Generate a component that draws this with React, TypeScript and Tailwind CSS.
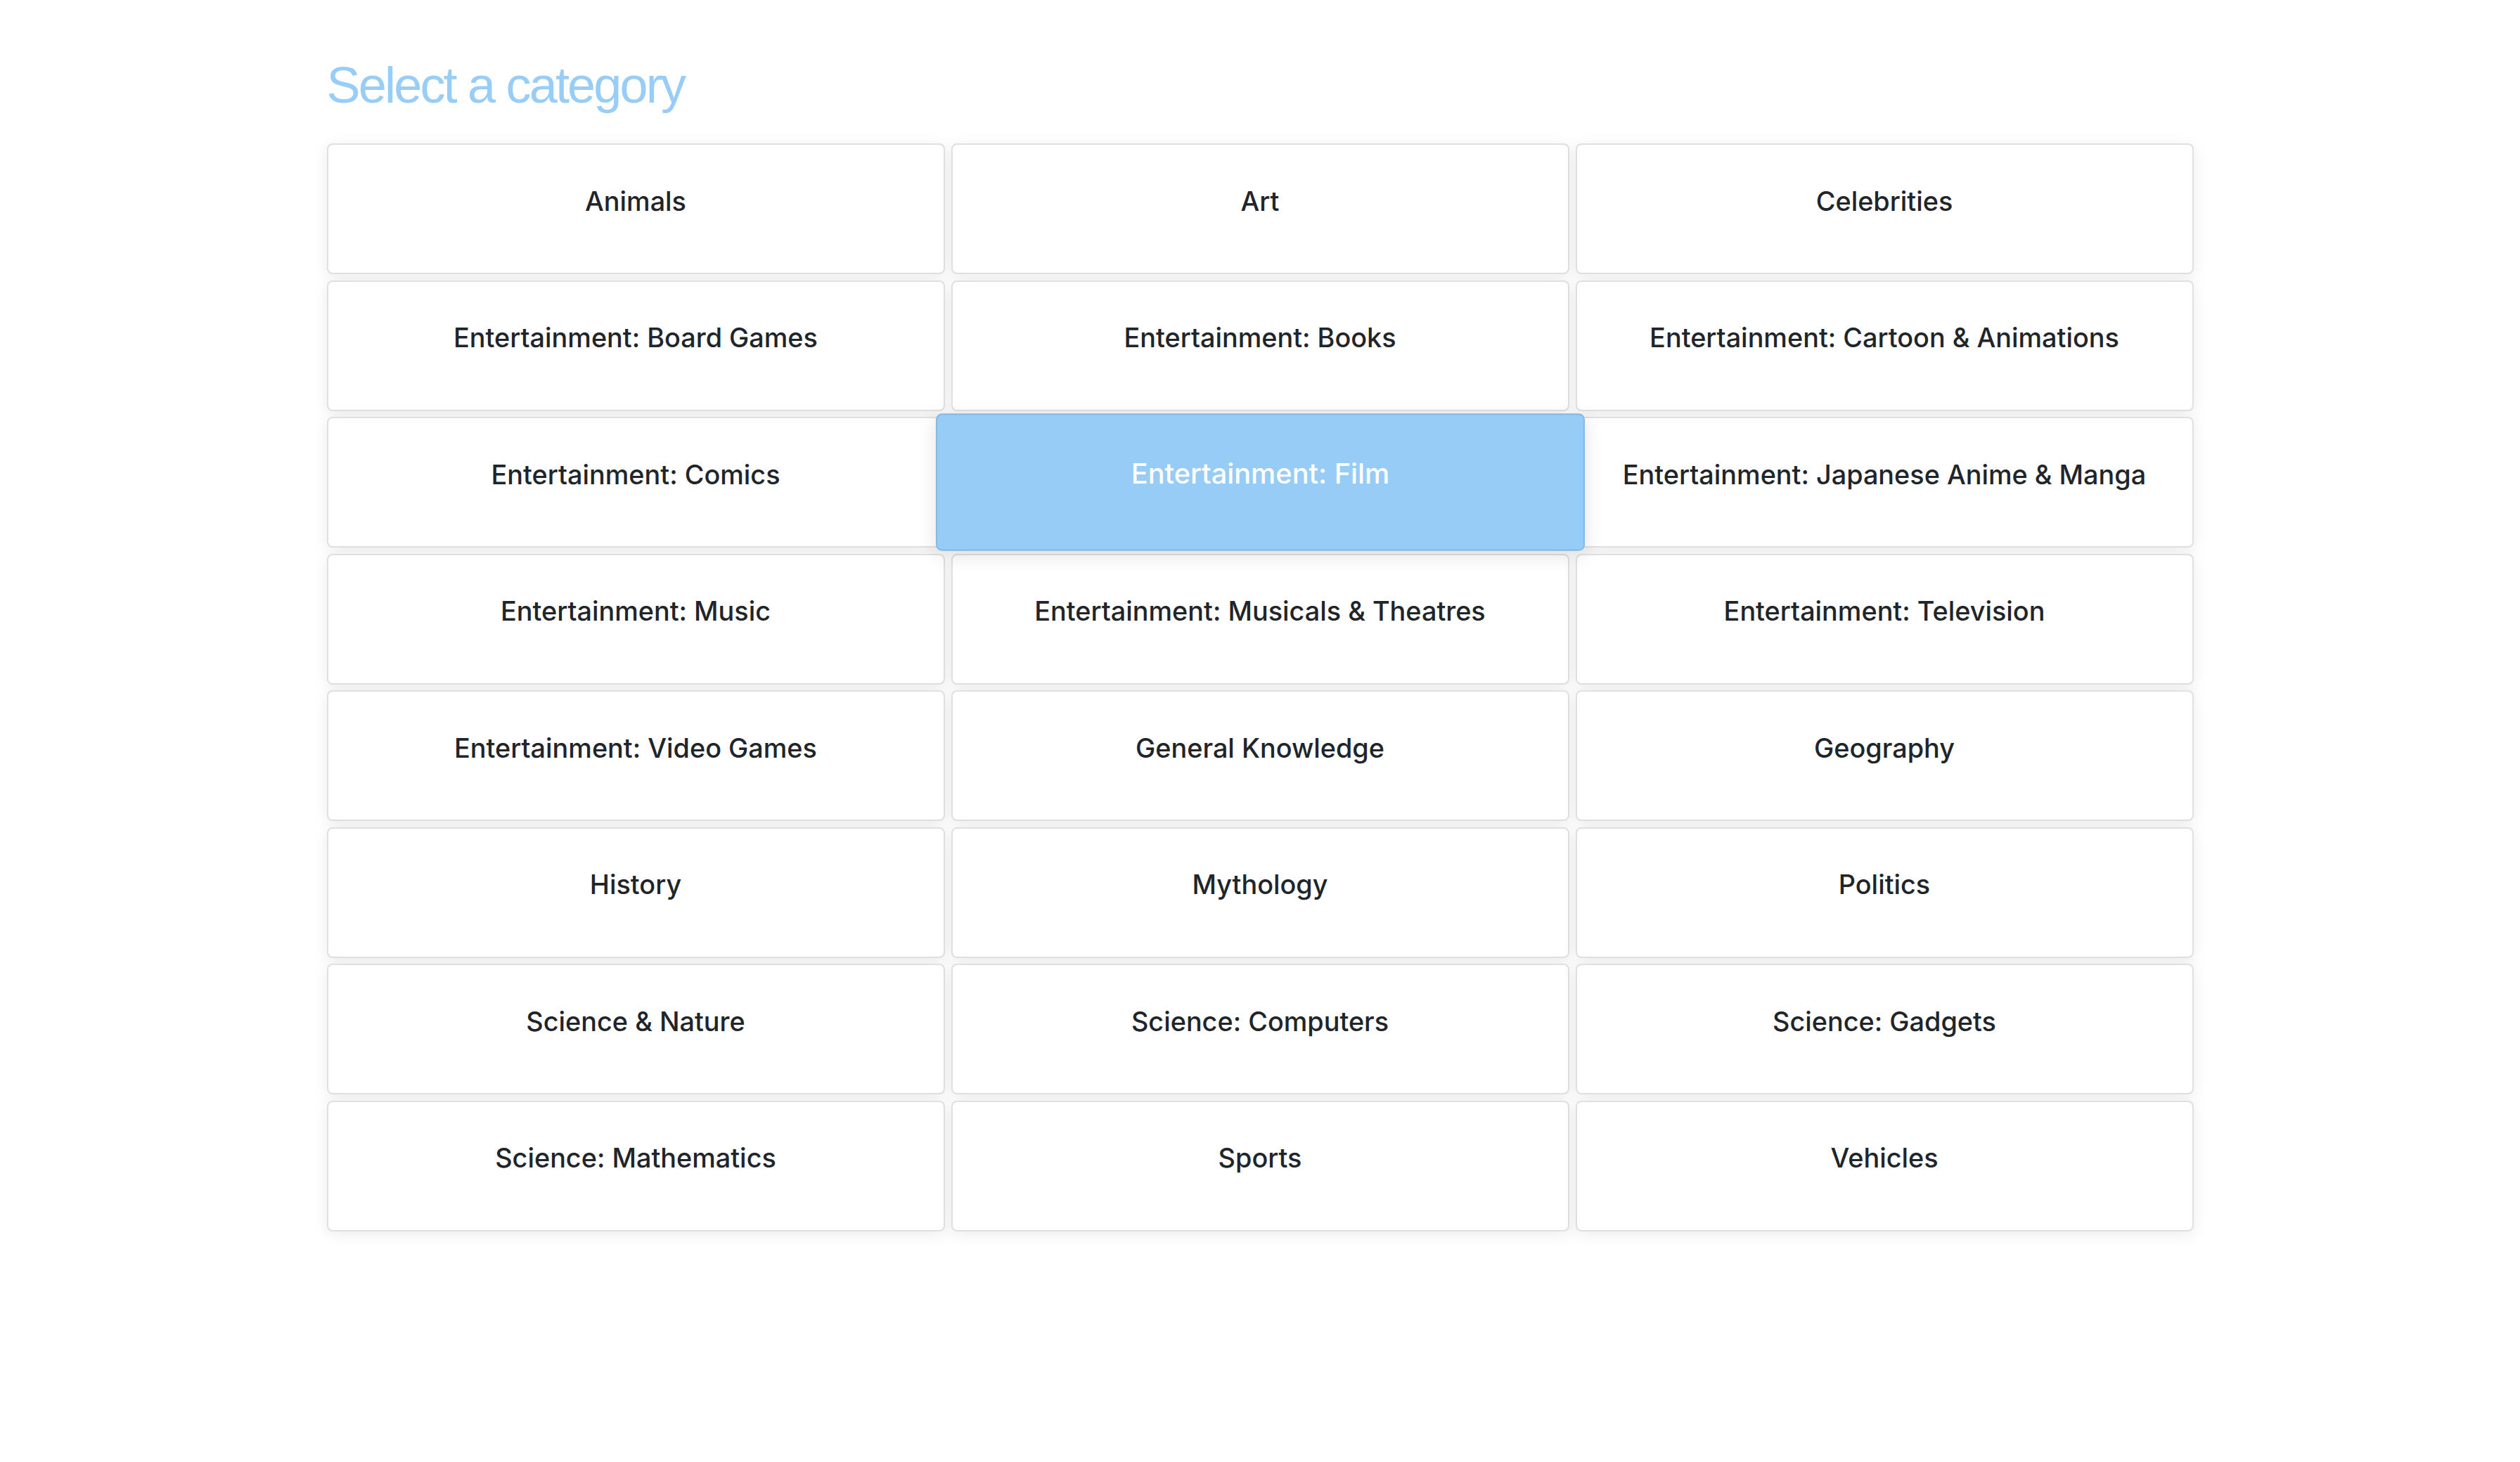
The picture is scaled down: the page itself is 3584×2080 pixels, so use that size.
import React from "react";

const categories = [
  "Animals",
  "Art",
  "Celebrities",
  "Entertainment: Board Games",
  "Entertainment: Books",
  "Entertainment: Cartoon & Animations",
  "Entertainment: Comics",
  "Entertainment: Film",
  "Entertainment: Japanese Anime & Manga",
  "Entertainment: Music",
  "Entertainment: Musicals & Theatres",
  "Entertainment: Television",
  "Entertainment: Video Games",
  "General Knowledge",
  "Geography",
  "History",
  "Mythology",
  "Politics",
  "Science & Nature",
  "Science: Computers",
  "Science: Gadgets",
  "Science: Mathematics",
  "Sports",
  "Vehicles",
];

export default function App() {
  const selected = "Entertainment: Film";
  return (
    <div className="min-h-[2080px] w-full bg-white">
      <div className="mx-auto w-[2655px] pt-[78px]">
        <h1
          className="mb-[40px] text-[72px] leading-[1.2] font-normal tracking-[-2.8px] text-[#97cdf7]"
          style={{ fontFamily: '"Liberation Sans", Arial, sans-serif' }}
        >
          Select a category
        </h1>
        <div className="grid grid-cols-3 gap-x-[9px] gap-y-[8.5px]">
          {categories.map((c) =>
            c === selected ? (
              <div
                key={c}
                className="relative z-10 flex h-[186px] scale-105 items-center justify-center rounded-[8px] border-2 border-[#86b9e4] bg-[#96ccf5] pb-[23px] text-[37.8px] font-medium text-white shadow-[0_6px_24px_rgba(0,0,0,0.12)]"
                style={{ fontFamily: 'Inter, "Noto Sans", sans-serif' }}
              >
                {c}
              </div>
            ) : (
              <div
                key={c}
                className="flex h-[186px] items-center justify-center rounded-[8px] border-2 border-[#e0e0e0] bg-white pb-[23px] text-[37.8px] font-medium text-[#212529] shadow-[0_4px_22px_rgba(0,0,0,0.08)]"
                style={{ fontFamily: 'Inter, "Noto Sans", sans-serif' }}
              >
                {c}
              </div>
            )
          )}
        </div>
      </div>
    </div>
  );
}
